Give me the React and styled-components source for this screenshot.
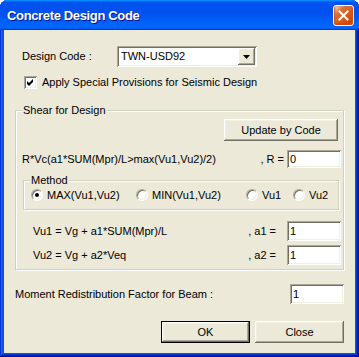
import React from 'react';
import styled, { createGlobalStyle } from 'styled-components';

const Global = createGlobalStyle`
  html, body { margin: 0; padding: 0; background: #ffffff; }
  body { font-family: "Liberation Sans", Arial, sans-serif; font-size: 11px; color: #000; }
  * { box-sizing: border-box; }
`;

const Window = styled.div`
  width: 359px;
  height: 357px;
  display: flex;
  flex-direction: column;
  background: #0855dd;
  border-radius: 8px 8px 0 0;
  overflow: hidden;
  box-shadow: inset -1px -1px #00138c, inset 1px 1px #0831d9, inset -2px -2px #001ea0,
    inset 2px 2px #166aee, inset -3px -3px #003bda, inset 3px 3px #0855dd;
`;

const TitleBar = styled.div`
  height: 30px;
  flex: none;
  display: flex;
  align-items: center;
  justify-content: space-between;
  padding: 0 5px 0 7px;
  background: linear-gradient(180deg, #0997ff, #0053ee 8%, #0050ee 40%, #0066ff 88%, #0066ff 93%, #005bff 95%, #003dd7 96%, #003dd7);
`;

const TitleText = styled.span`
  color: #fff;
  font-weight: bold;
  font-size: 13px;
  letter-spacing: -0.35px;
  text-shadow: 1px 1px #0f1089;
  padding-top: 1px;
`;

const CloseButton = styled.div`
  width: 21px;
  height: 21px;
  border: 1px solid #fff;
  border-radius: 3px;
  display: flex;
  align-items: center;
  justify-content: center;
  background-image: radial-gradient(circle at 90% 90%, #cc4600 0%, #dc6527 55%, #cd7546 70%, #ffccb2 90%, #fff 100%);
  box-shadow: inset 0 -1px 2px 1px #da4600;
`;

const Client = styled.div`
  flex: 1;
  margin: 0 4px 4px;
  background: #ece9d8;
  padding: 16px 11px 10px;
  display: flex;
  flex-direction: column;
`;

const Row = styled.div`
  display: flex;
  align-items: center;
  margin-top: ${(p) => p.$mt || 0}px;
  padding-left: ${(p) => p.$pl || 0}px;
  padding-right: ${(p) => p.$pr || 0}px;
  justify-content: ${(p) => p.$justify || 'flex-start'};
  gap: ${(p) => p.$gap || 0}px;
`;

const Label = styled.span`
  white-space: nowrap;
  line-height: 13px;
  width: ${(p) => (p.$w ? `${p.$w}px` : 'auto')};
  flex: ${(p) => (p.$grow ? 1 : 'none')};
`;

const Suffix = styled.span`
  white-space: nowrap;
  line-height: 13px;
  margin-right: ${(p) => p.$gap || 0}px;
`;

const sunken = `
  box-shadow: inset 1px 1px #aca899, inset -1px -1px #ffffff, inset 2px 2px #716f64, inset -2px -2px #f1efe2;
`;

const raised = `
  box-shadow: inset -1px -1px #716f64, inset 1px 1px #ffffff, inset -2px -2px #aca899, inset 2px 2px #f1efe2;
`;

const Select = styled.div`
  width: 140px;
  height: 21px;
  padding: 2px;
  display: flex;
  background: #fff;
  ${sunken}
`;

const SelectValue = styled.span`
  flex: 1;
  padding-left: 2px;
  line-height: 17px;
`;

const DropButton = styled.div`
  width: 17px;
  height: 17px;
  background: #ece9d8;
  display: flex;
  align-items: center;
  justify-content: center;
  ${raised}
`;

const CheckBox = styled.span`
  width: 13px;
  height: 13px;
  background: #fff;
  display: inline-flex;
  ${sunken}
`;

const GroupBox = styled.div`
  position: relative;
  border: 1px solid #d0d0bf;
  box-shadow: inset 1px 1px #ffffff, 1px 1px #ffffff;
  margin: ${(p) => p.$margin || '0'};
  padding: ${(p) => p.$padding || '0'};
  height: ${(p) => (p.$h ? `${p.$h}px` : 'auto')};
  display: flex;
  flex-direction: ${(p) => p.$dir || 'column'};
  align-items: ${(p) => p.$align || 'stretch'};
`;

const Legend = styled.span`
  position: absolute;
  top: -7px;
  left: 6px;
  padding: 0 1px;
  line-height: 13px;
  background: #ece9d8;
`;

const Button = styled.div`
  width: ${(p) => p.$w}px;
  height: 22px;
  display: flex;
  align-items: center;
  justify-content: center;
  background: #ece9d8;
  line-height: 13px;
  ${(p) =>
    p.$default
      ? `border: 1px solid #000; box-shadow: inset -1px -1px #716f64, inset 1px 1px #ffffff, inset -2px -2px #aca899, inset 2px 2px #f1efe2;`
      : raised}
`;

const TextInput = styled.input`
  width: 54px;
  height: ${(p) => p.$h || 20}px;
  border: none;
  outline: none;
  padding: 0 2px 0 3px;
  font: inherit;
  color: #000;
  background: #fff;
  ${sunken}
`;

const RadioItem = styled.label`
  display: flex;
  align-items: center;
  gap: 4px;
  width: ${(p) => (p.$w ? `${p.$w}px` : 'auto')};
  flex: none;
  line-height: 13px;
`;

const RadioCircle = styled.span`
  position: relative;
  width: 12px;
  height: 12px;
  border-radius: 50%;
  background: #fff;
  border: 1px solid;
  border-color: #aca899 #ffffff #ffffff #aca899;
  box-shadow: inset 1px 1px #716f64, inset -1px -1px #f1efe2;
  &::after {
    content: '';
    display: ${(p) => (p.$checked ? 'block' : 'none')};
    position: absolute;
    left: 3px;
    top: 3px;
    width: 4px;
    height: 4px;
    border-radius: 50%;
    background: #000;
  }
`;

const Radio = ({ checked, label, w }) => (
  <RadioItem $w={w}>
    <RadioCircle $checked={checked} />
    <span>{label}</span>
  </RadioItem>
);

export default function App() {
  return (
    <>
      <Global />
      <Window>
        <TitleBar>
          <TitleText>Concrete Design Code</TitleText>
          <CloseButton>
            <svg width="11" height="11" viewBox="0 0 11 11">
              <path d="M1.5 1.5 L9.5 9.5 M9.5 1.5 L1.5 9.5" stroke="#fff" strokeWidth="2" strokeLinecap="square" />
            </svg>
          </CloseButton>
        </TitleBar>
        <Client>
          <Row $pl={7}>
            <Label $w={95}>Design Code :</Label>
            <Select>
              <SelectValue>TWN-USD92</SelectValue>
              <DropButton>
                <svg width="7" height="4" viewBox="0 0 7 4">
                  <polygon points="0,0 7,0 3.5,4" fill="#000" />
                </svg>
              </DropButton>
            </Select>
          </Row>
          <Row $mt={9} $pl={9} $gap={5}>
            <CheckBox>
              <svg width="13" height="13" viewBox="0 0 13 13">
                <polygon points="3,5 5,7 9,3 9,6 5,10 3,8" fill="#000" />
              </svg>
            </CheckBox>
            <Label>Apply Special Provisions for Seismic Design</Label>
          </Row>

          <GroupBox $margin="21px 0 0 0" $padding="8px 0 4px 0">
            <Legend>Shear for Design</Legend>
            <Row $justify="flex-end" $pr={5}>
              <Button $w={114}>Update by Code</Button>
            </Row>
            <Row $mt={9} $pl={6} $pr={2}>
              <Label $grow>R*Vc(a1*SUM(Mpr)/L&gt;max(Vu1,Vu2)/2)</Label>
              <Suffix $gap={3}>, R =</Suffix>
              <TextInput $h={18} defaultValue="0" />
            </Row>
            <GroupBox $margin="12px 4px 0 7px" $padding="0 0 0 7px" $h={30} $dir="row" $align="center">
              <Legend>Method</Legend>
              <Radio checked label="MAX(Vu1,Vu2)" w={105} />
              <Radio label="MIN(Vu1,Vu2)" w={110} />
              <Radio label="Vu1" w={47} />
              <Radio label="Vu2" />
            </GroupBox>
            <Row $mt={11} $pl={17} $pr={2}>
              <Label $grow>Vu1 = Vg + a1*SUM(Mpr)/L</Label>
              <Suffix $gap={11}>, a1 =</Suffix>
              <TextInput defaultValue="1" />
            </Row>
            <Row $mt={4} $pl={17} $pr={2}>
              <Label $grow>Vu2 = Vg + a2*Veq</Label>
              <Suffix $gap={11}>, a2 =</Suffix>
              <TextInput defaultValue="1" />
            </Row>
          </GroupBox>

          <Row $mt={14}>
            <Label $grow>Moment Redistribution Factor for Beam :</Label>
            <TextInput defaultValue="1" />
          </Row>
          <Row $mt={17} $justify="flex-end" $gap={5}>
            <Button $w={89} $default>OK</Button>
            <Button $w={89}>Close</Button>
          </Row>
        </Client>
      </Window>
    </>
  );
}
